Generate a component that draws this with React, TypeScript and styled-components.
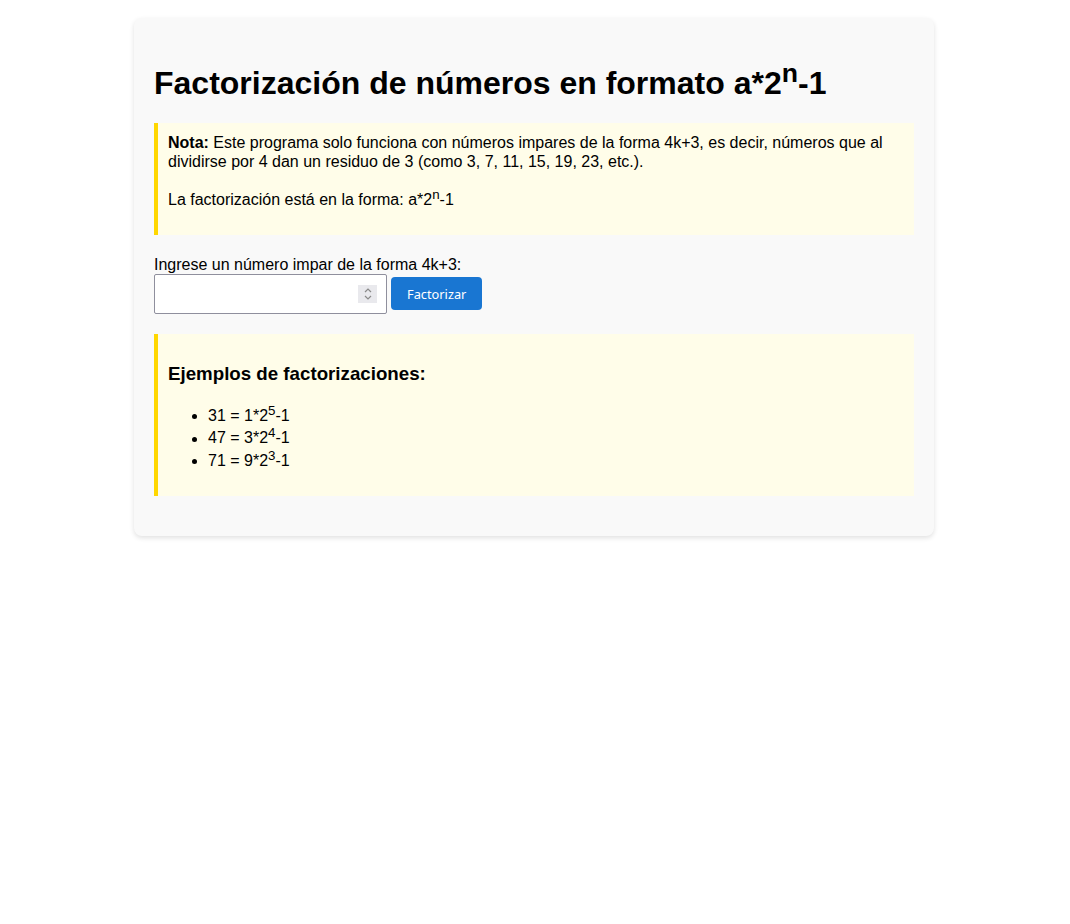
import styled, { createGlobalStyle } from 'styled-components';

const GlobalStyle = createGlobalStyle`
  body {
    margin: 8px 9px 8px 7px;
    font-family: "Liberation Sans", Arial, sans-serif;
    font-size: 16px;
    color: #000;
    background: #fff;
  }
`;

const Container = styled.div`
  max-width: 800px;
  margin: 10px auto;
  padding: 20px;
  background-color: #f9f9f9;
  border-radius: 8px;
  box-shadow: 0 2px 5px rgba(0, 0, 0, 0.12);
  box-sizing: border-box;
`;

const Title = styled.h1`
  font-size: 32px;
  margin: 20px 0 21px;
`;

const Note = styled.div<{ $top?: number; $bottom?: number }>`
  background-color: #fffde9;
  border-left: 4px solid #ffd700;
  padding: ${(p) => p.$top ?? 10}px 10px ${(p) => p.$bottom ?? 10}px 10px;
  line-height: 19px;

  sup {
    line-height: 0;
  }
`;

const Form = styled.div`
  margin: 20px 0;
`;

const Label = styled.label`
  display: block;
  line-height: 19px;
`;

const Row = styled.div`
  display: flex;
  align-items: center;
  gap: 4px;
`;

const InputWrap = styled.div`
  position: relative;
  display: flex;
`;

const NumberInput = styled.input`
  box-sizing: border-box;
  width: 233px;
  height: 40px;
  padding: 8px 36px 8px 8px;
  font-size: 16px;
  border: 1px solid #8f8f9d;
  border-radius: 2px;
  background: #fff;
  -moz-appearance: textfield;

  &::-webkit-inner-spin-button,
  &::-webkit-outer-spin-button {
    -webkit-appearance: none;
    margin: 0;
  }
`;

const Spinner = styled.span`
  position: absolute;
  right: 10px;
  top: 11px;
  width: 19px;
  height: 18px;
  background: #e9e9ed;
  display: flex;
  align-items: center;
  justify-content: center;
  pointer-events: none;
`;

const Button = styled.button`
  height: 33px;
  padding: 8px 16px;
  border: none;
  border-radius: 4px;
  background-color: #1976d2;
  color: #fff;
  font-family: "Noto Sans", sans-serif;
  font-size: 12.8px;
  cursor: pointer;
`;

const SubTitle = styled.h3`
  font-size: 18.72px;
  margin: 18.72px 0 19.72px;
`;

const List = styled.ul`
  margin: 16px 0;
  padding-left: 40px;
  line-height: normal;

  sup {
    line-height: normal;
  }
`;

const Result = styled.div`
  margin-top: 20px;
`;

const examples = [
  { n: 31, a: 1, e: 5 },
  { n: 47, a: 3, e: 4 },
  { n: 71, a: 9, e: 3 },
];

export default function App() {
  return (
    <>
      <GlobalStyle />
      <Container>
        <Title>
          Factorización de números en formato a*2<sup>n</sup>-1
        </Title>
        <Note $bottom={26}>
          <strong>Nota:</strong> Este programa solo funciona con números impares de la forma 4k+3, es
          decir, números que al dividirse por 4 dan un residuo de 3 (como 3, 7, 11, 15, 19, 23, etc.).
          <br />
          <br />
          La factorización está en la forma: a*2<sup>n</sup>-1
        </Note>
        <Form>
          <Label htmlFor="numero">Ingrese un número impar de la forma 4k+3:</Label>
          <Row>
            <InputWrap>
              <NumberInput id="numero" type="number" />
              <Spinner>
                <svg width="10" height="14" viewBox="0 0 10 14" fill="none" stroke="#8a8a8a" strokeWidth="1.2">
                  <path d="M2 5 L5 2 L8 5" />
                  <path d="M2 9 L5 12 L8 9" />
                </svg>
              </Spinner>
            </InputWrap>
            <Button>Factorizar</Button>
          </Row>
        </Form>
        <Note $top={12}>
          <SubTitle>Ejemplos de factorizaciones:</SubTitle>
          <List>
            {examples.map((x) => (
              <li key={x.n}>
                {x.n} = {x.a}*2<sup>{x.e}</sup>-1
              </li>
            ))}
          </List>
        </Note>
        <Result />
      </Container>
    </>
  );
}
